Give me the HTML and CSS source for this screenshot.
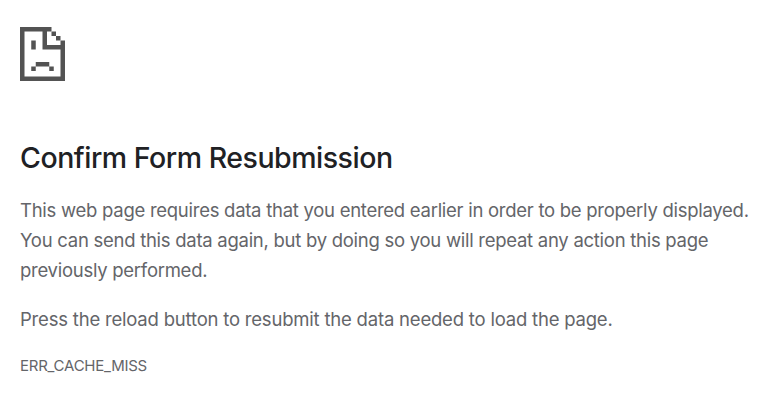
FILE: index.html
```html
<!DOCTYPE html>
<html lang="en">
<head>
  <meta charset="UTF-8">
  <meta name="viewport" content="width=device-width, initial-scale=1.0">
  <title>Confirm Form Resubmission</title>
  <link rel="stylesheet" href="styles.css">
</head>
<body>
  <main class="error-page">
    <svg class="icon" viewBox="0 0 20 24" aria-hidden="true">
      <path fill-rule="evenodd" d="M0 0H14V2H12V8H18V6H20V24H0ZM2 2V22H18V10H10V2Z"/>
      <path d="M14 2h2v2h-2zM16 4h2v2h-2zM5 6h2v4H5zM7 15.5h6v2H7zM5 17.5h2v2H5zM13 17.5h2v2h-2z"/>
    </svg>
    <h1>Confirm Form Resubmission</h1>
    <p>This web page requires data that you entered earlier in order to be properly displayed.<br>
      You can send this data again, but by doing so you will repeat any action this page<br>
      previously performed.</p>
    <p class="hint">Press the reload button to resubmit the data needed to load the page.</p>
    <div class="error-code">ERR_CACHE_MISS</div>
  </main>
</body>
</html>
```
FILE: styles.css
```css
body {
  margin: 0;
  background: #fff;
  color: #646569;
  font-family: Inter, "Liberation Sans", sans-serif;
}
.error-page {
  padding: 27px 0 0 20px;
  white-space: nowrap;
}
.icon {
  display: block;
  width: 45px;
  height: 54px;
  fill: #535353;
}
h1 {
  margin: 59px 0 0;
  color: #202124;
  font-size: 28.5px;
  font-weight: 500;
  line-height: 36px;
  letter-spacing: -0.48px;
}
p {
  margin: 19px 0 0;
  font-size: 18.5px;
  line-height: 30px;
  letter-spacing: -0.27px;
}
.hint {
  letter-spacing: -0.2px;
}
.error-code {
  margin-top: 22px;
  font-size: 15px;
  line-height: 20px;
  letter-spacing: -0.24px;
}
```
